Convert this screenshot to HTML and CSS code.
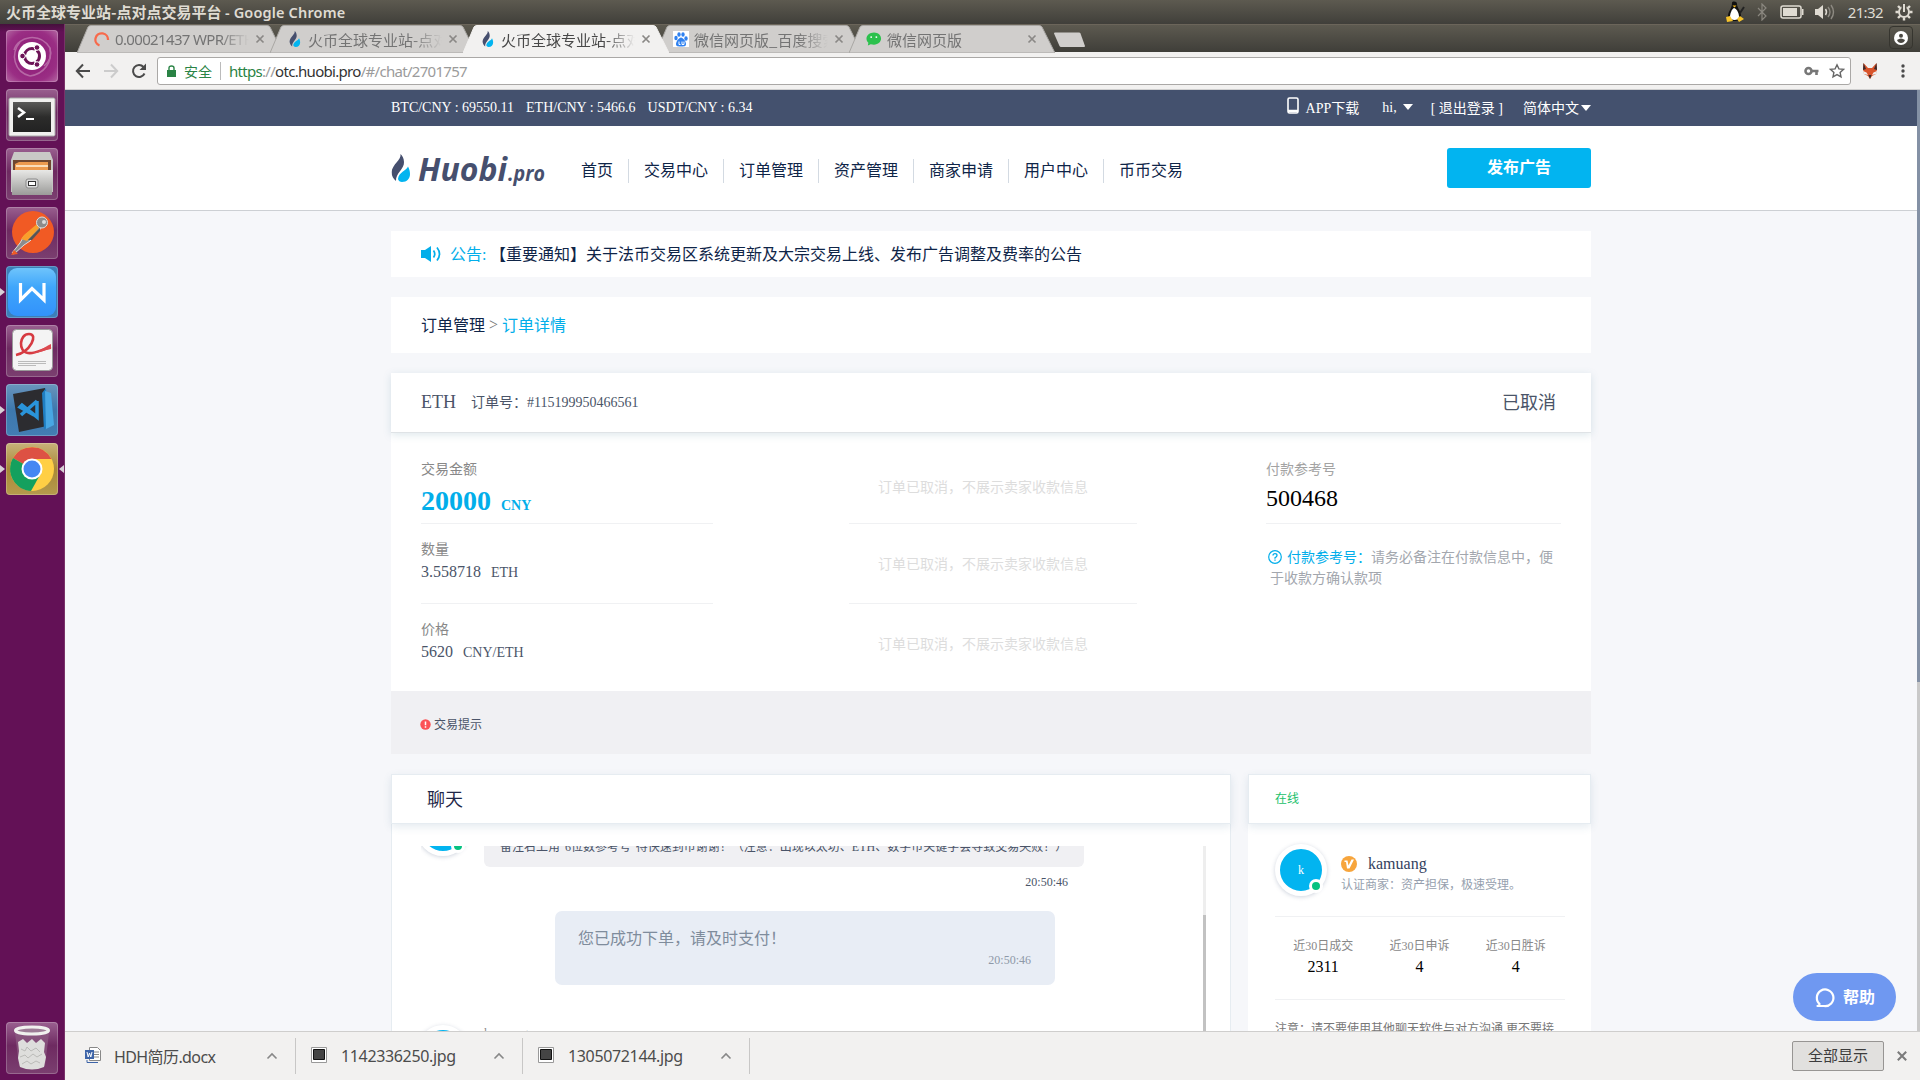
FILE: index.html
```html
<!DOCTYPE html>
<html lang="zh-CN">
<head>
<meta charset="utf-8">
<title>火币全球专业站-点对点交易平台</title>
<link rel="stylesheet" href="styles.css">
</head>
<body>
<svg class="defs" width="0" height="0">
  <defs>
    <linearGradient id="metal" x1="0" y1="0" x2="0" y2="1"><stop offset="0" stop-color="#e8e8e6"/><stop offset="1" stop-color="#9b9b99"/></linearGradient>
    <linearGradient id="screen" x1="0" y1="0" x2="0" y2="1"><stop offset="0" stop-color="#5a5a58"/><stop offset=".5" stop-color="#2c2c2b"/><stop offset="1" stop-color="#222"/></linearGradient>
    <linearGradient id="wps" x1="0" y1="0" x2="0" y2="1"><stop offset="0" stop-color="#6fc4fb"/><stop offset=".4" stop-color="#3fa6fb"/><stop offset="1" stop-color="#3292fb"/></linearGradient>
    <symbol id="flame" viewBox="0 0 19 28"><path d="M9 0C10 6 1 10 0 18c0 4 2 7 4.500 9C4 19 13 15 12.500 8 12.300 4 11 2 9 0z" fill="#464f6e"/><path d="M16.500 12.500C15 17 7 18 6.500 25c.5 2 2 3 4 3 5 0 8-3.500 8-8 0-3-.8-5-2-7.500z" fill="#02b4f0"/></symbol>
    <symbol id="close" viewBox="0 0 10 10"><path d="M1.500 1.500l7 7M8.500 1.500l-7 7" fill="none" stroke="currentColor" stroke-width="1.700"/></symbol>
    <symbol id="tab" viewBox="0 0 206 28" preserveAspectRatio="none"><path d="M0 28L11 2Q12 .5 14 .5H190Q192 .5 193 2L206 28z"/></symbol>
    <symbol id="jpg" viewBox="0 0 16 16"><path d="M.5.500h15v15H.5z" fill="#fff" stroke="#999"/><path d="M2.500 2.500h11v10h-11z" fill="#444" stroke="#111"/></symbol>
    <symbol id="up" viewBox="0 0 12 8"><path d="M1.500 6.500L6 2l4.500 4.500" fill="none" stroke="#888" stroke-width="1.600"/></symbol>
  </defs>
</svg>

<header class="sysbar">
  <span class="sys-title">火币全球专业站-点对点交易平台 <span class="lat">- Google Chrome</span></span>
  <div class="sys-icons">
    <svg width="20" height="24" viewBox="0 0 20 24"><path d="M7 3C7 1 12 1 12 4c0 4 4 7 4 12 0 4-3 5-7 5s-6-1-6-5c0-5 4-7 4-13z" fill="#111"/><path d="M9 8c3 1 5 5 5 9s-9 4-9 0c0-4 2-8 4-9z" fill="#fff"/><path d="M7.500 5.500l4 0-2 2z" fill="#f5b81c"/><path d="M1 17l4-1 3 5-6 1zM12 19l3-3 4 3-5 3z" fill="#f7c32a"/><path d="M15 13l4-6" stroke="#222" stroke-width="2"/></svg>
    <svg width="12" height="18" viewBox="0 0 12 18"><path d="M2 5l8 8-4 4V1l4 4-8 8" fill="none" stroke="#8a877f" stroke-width="1.200"/></svg>
    <svg width="24" height="14" viewBox="0 0 24 14"><rect x="1" y="1" width="20" height="12" rx="2" fill="none" stroke="#dfdbd2" stroke-width="1.500"/><path d="M3 3h14v8H3zM22 4h1.500v6H22z" fill="#dfdbd2"/></svg>
    <svg width="20" height="18" viewBox="0 0 20 18"><path d="M0 6h3l5-4v14l-5-4H0z" fill="#dfdbd2"/><path d="M10.500 6q2 3 0 6" fill="none" stroke="#dfdbd2" stroke-width="1.500"/><path d="M13 4q4 5 0 10M16 2q5 7 0 14" fill="none" stroke="#8d8a82" stroke-width="1.400"/></svg>
    <span class="clock">21:32</span>
    <svg width="18" height="18" viewBox="0 0 18 18"><g stroke="#dfdbd2" stroke-width="2.400"><path d="M9 .5v3M9 14.500v3M.5 9h3M14.500 9h3M3 3l2.200 2.200M12.800 12.800L15 15M15 3l-2.200 2.200M5.200 12.800L3 15"/></g><circle cx="9" cy="9" r="5" fill="none" stroke="#dfdbd2" stroke-width="2"/><path d="M9 0v7" stroke="#524f47" stroke-width="5"/><path d="M9 1v8" stroke="#dfdbd2" stroke-width="2"/></svg>
  </div>
</header>

<div class="desktop">
  <aside class="launcher">
    <div class="tile ubuntu"><svg width="52" height="52" viewBox="0 0 52 52"><g fill="none" stroke="#c583b6" stroke-width="1.500" opacity=".7"><path d="M8 20C12 6 34 2 44 18c2 8-1 14-6 18"/><path d="M14 12C4 24 8 42 24 46"/><path d="M44 18c3 14-6 26-20 28"/></g><circle cx="26" cy="26" r="14" fill="#fff"/><circle cx="26" cy="26" r="7.500" fill="none" stroke="#6d1457" stroke-width="3" stroke-dasharray="13.700 2" stroke-dashoffset="6.800"/><g fill="#6d1457" stroke="#fff"><circle cx="16.500" cy="26" r="2.800"/><circle cx="31" cy="17.500" r="2.800"/><circle cx="31" cy="34.500" r="2.800"/></g></svg></div>
    <div class="tile"><svg width="52" height="52" viewBox="0 0 52 52"><rect x="3" y="9" width="46" height="38" rx="1.500" fill="#f0f0ee" stroke="#aaa"/><rect x="7" y="13" width="38" height="30" fill="url(#screen)"/><path d="M12 19l6 4.500-6 4.500" fill="none" stroke="#fff" stroke-width="2.500"/><path d="M20 30h8" stroke="#fff" stroke-width="2"/></svg></div>
    <div class="tile"><svg width="52" height="52" viewBox="0 0 52 52"><path d="M8 4h36l3 8v32H5V12z" fill="#c9c9c6"/><path d="M7 12h38v12H7z" fill="#6f4630"/><path d="M9 16l4-2h29v8H9z" fill="#ed9a4f"/><path d="M10 18h32" stroke="#fff3df" stroke-width="1.500"/><path d="M5 22h42l-1 25H6z" fill="url(#metal)"/><rect x="20" y="31" width="12" height="9" rx="2" fill="#ddd" stroke="#888"/><rect x="22.500" y="33.500" width="7" height="4" fill="#fff" stroke="#333"/></svg></div>
    <div class="tile"><svg width="52" height="52" viewBox="0 0 52 52"><circle cx="27" cy="25" r="21" fill="#f15a24"/><path d="M33 17L18 29l-4 7-8 10 2 1 10-9 6-4 12-14z" fill="#8c8c8c" stroke="#ddd"/><path d="M31 17L18 28l-3 4 6 2 12-13z" fill="#f9a02c"/><path d="M34 21L22 33l4 0 8-9z" fill="#555"/><circle cx="36" cy="15.500" r="5.500" fill="#8c8c8c" stroke="#ddd"/><circle cx="38" cy="15" r="2" fill="#ddd"/><path d="M5 48l3-5 4 4z" fill="#f15a24"/></svg></div>
    <div class="tile blue run"><svg width="52" height="52" viewBox="0 0 52 52"><rect x="2" y="2" width="48" height="48" rx="9" fill="url(#wps)"/><path d="M14.500 17v17L26 22.500 38 34V17" fill="none" stroke="#fff" stroke-width="3.200"/></svg></div>
    <div class="tile"><svg width="52" height="52" viewBox="0 0 52 52"><rect x="6.500" y="4.500" width="40" height="41" rx="4" fill="#f4f4f4" stroke="#999"/><path d="M10 30C24 27 33 9 23 9c-10 0-11 18-1 19 8 1 14-4 23-6" fill="none" stroke="#d63a41" stroke-width="2.600"/><path d="M24 28c8 0 14-6 21-9v5c-7 1-13 5-21 4z" fill="#dc4a50"/><path d="M12 36.500h28M12 38.500h28M12 40.500h18" stroke="#bbb"/></svg></div>
    <div class="tile steel run"><svg width="52" height="52" viewBox="0 0 52 52"><path d="M7 10l32-6 2 38-28 6z" fill="#2c2c30"/><path d="M36 9l4-5 2 38-4 4z" fill="#1f7ec2"/><path d="M39 7l6 2 3 32-8 4z" fill="#48a7e4"/><path d="M31 17v16L16 21l-2 2 14 8M31 17L15 31" fill="none" stroke="#2a94da" stroke-width="3.500"/></svg></div>
    <div class="tile gold run focus"><svg width="52" height="52" viewBox="0 0 52 52"><circle cx="26" cy="26" r="22" fill="#ffcf45"/><path d="M26 26L7 15A22 22 0 0 1 45.500 16H26z" fill="#dd5144"/><path d="M26 26L7 15a22 22 0 0 0 18 33l9.500-17z" fill="#14a05e"/><circle cx="26" cy="26" r="10.500" fill="#fff"/><circle cx="26" cy="26" r="8.500" fill="#4587f3"/></svg></div>
    <div class="tile trash"><svg width="52" height="52" viewBox="0 0 52 52"><path d="M9 11l4 33q13 6 26 0l4-33z" fill="#8d5c83" opacity=".7"/><path d="M12 20l5-3 4 4 5-4 4 4 5-4 4 4-1 9 2 5-2 10q-12 5-24 0l-2-9 1-7z" fill="#dededc"/><path d="M15 27l4 2 2-4 4 4 5-3 4 4M14 35l5-2 3 3 5-4 4 3 5-3M16 42l5-3 4 3 5-3 4 2" fill="none" stroke="#bbbbb8"/><ellipse cx="26" cy="8.500" rx="16.500" ry="3.500" fill="#9d7b96" stroke="#f0f0ee" stroke-width="3"/></svg></div>
  </aside>

  <div class="browser">
    <nav class="tabs">
      <div class="tab"><svg class="tab-bg" viewBox="0 0 206 28"><use href="#tab"/></svg><svg class="fav" width="15" height="16" viewBox="0 0 15 16"><path d="M5 14.500A6.300 6.300 0 1 1 13.500 9" fill="none" stroke="#f76a4b" stroke-width="2.300"/></svg><span class="tab-text lat">0.00021437 WPR/ETH</span><svg class="x"><use href="#close"/></svg></div>
      <div class="tab"><svg class="tab-bg" viewBox="0 0 206 28"><use href="#tab"/></svg><svg class="fav" width="15" height="16"><use href="#flame"/></svg><span class="tab-text">火币全球专业站-点对点</span><svg class="x"><use href="#close"/></svg></div>
      <div class="tab active"><svg class="tab-bg" viewBox="0 0 206 28"><use href="#tab"/></svg><svg class="fav" width="15" height="16"><use href="#flame"/></svg><span class="tab-text">火币全球专业站-点对点</span><svg class="x"><use href="#close"/></svg></div>
      <div class="tab"><svg class="tab-bg" viewBox="0 0 206 28"><use href="#tab"/></svg><svg class="fav" width="16" height="16" viewBox="0 0 16 16"><path d="M0 0h16v16H0z" fill="#fff"/><g fill="#2f81f0"><ellipse cx="3" cy="7" rx="1.700" ry="2.200"/><ellipse cx="6" cy="3.500" rx="1.700" ry="2.300"/><ellipse cx="10" cy="3.500" rx="1.700" ry="2.300"/><ellipse cx="13" cy="7.500" rx="1.700" ry="2.200"/><path d="M8 6.500c2 0 5 4 5 6.500s-2 2.500-5 2.500-5 0-5-2.500 3-6.500 5-6.500z"/></g><path d="M6 10.500v3h1.500M9 10.500v3h2v-3" fill="none" stroke="#fff"/></svg><span class="tab-text">微信网页版_百度搜索</span><svg class="x"><use href="#close"/></svg></div>
      <div class="tab"><svg class="tab-bg" viewBox="0 0 206 28"><use href="#tab"/></svg><svg class="fav" width="17" height="16" viewBox="0 0 17 16"><path d="M8.500 1C13 1 16 4 16 7.500S13 14 8.500 14L5 13.500 2 15l.5-3C1 11 .5 9 .5 7.500.500 4 4 1 8.500 1z" fill="#2cc14d"/><circle cx="5.500" cy="6" r="1" fill="#fff"/><circle cx="11" cy="6" r="1" fill="#fff"/></svg><span class="tab-text">微信网页版</span><svg class="x"><use href="#close"/></svg></div>
      <svg class="newtab" width="33" height="16" viewBox="0 0 33 16"><path d="M1 1.500Q1 .5 2 .5H26Q27 .5 27.500 1.500L32 14q0 1-1 1H8Q7 15 6.500 14z" fill="#d0cecc"/></svg>
      <span class="user"><svg width="14" height="14" viewBox="0 0 14 14"><circle cx="7" cy="7" r="7" fill="#fff"/><circle cx="7" cy="4.700" r="2" fill="#4a4842"/><path d="M3 9q4-3 8 0-1 3-4 3T3 9z" fill="#4a4842"/></svg></span>
    </nav>

    <div class="toolbar">
      <svg width="16" height="16" viewBox="0 0 16 16"><path d="M15 8H2M8 1.500L1.800 8 8 14.500" fill="none" stroke="#4a4a4a" stroke-width="2"/></svg>
      <svg width="16" height="16" viewBox="0 0 16 16"><path d="M1 8h13M8 1.500L14.200 8 8 14.500" fill="none" stroke="#ccc" stroke-width="2"/></svg>
      <svg width="16" height="16" viewBox="0 0 16 16"><path d="M13.500 10.500A6 6 0 1 1 12.500 4" fill="none" stroke="#4a4a4a" stroke-width="2"/><path d="M15 .5V7H8.500z" fill="#4a4a4a"/></svg>
      <div class="omnibox">
        <svg width="9" height="12" viewBox="0 0 9 12"><path d="M0 5h9v7H0z" fill="#2a8345"/><path d="M2 5V3q0-2 2.500-2T7 3v2" fill="none" stroke="#2a8345" stroke-width="1.400"/></svg>
        <span class="secure">安全</span>
        <span class="url lat"><b>https</b>://<i>otc.huobi.pro</i>/#/chat/2701757</span>
        <svg class="key" width="15" height="10" viewBox="0 0 15 10"><circle cx="4.500" cy="5" r="3" fill="none" stroke="#777" stroke-width="2.600"/><path d="M8 5h6.500M12.500 5v4" stroke="#777" stroke-width="2.600"/></svg>
        <svg width="16" height="16" viewBox="0 0 16 16"><path d="M8 1.800l1.900 4.100 4.500.5-3.300 3 .9 4.400L8 11.600l-4 2.200.9-4.400-3.300-3 4.500-.5z" fill="none" stroke="#666" stroke-width="1.400"/></svg>
      </div>
      <svg class="fox" width="16" height="16" viewBox="0 0 16 16"><path d="M1.500 0L6 5h4l4.500-5 .5 6-1 5-4 2-2 3-2-3-4-2-1-5z" fill="#d9542b"/><path d="M1.500 0L4 6 1 7zM14.500 0L12 6l3 1zM6.500 12L8 16l1.500-4z" fill="#3a2a2c"/><path d="M1 8l3.500 1.500L6 12l-4-1zM15 8l-3.500 1.500L10 12l4-1z" fill="#eee"/></svg>
      <svg width="4" height="14" viewBox="0 0 4 14"><g fill="#4a4a4a"><circle cx="2" cy="2" r="1.700"/><circle cx="2" cy="7" r="1.700"/><circle cx="2" cy="12" r="1.700"/></g></svg>
    </div>

    <div class="page">
      <div class="topline"><div class="wrap topline-in">
        <span class="tick">BTC/CNY : 69550.11</span><span class="tick">ETH/CNY : 5466.6</span><span class="tick">USDT/CNY : 6.34</span>
        <span class="top-app"><svg width="12" height="17" viewBox="0 0 12 17"><rect x="1" y="1" width="10" height="15" rx="1.500" fill="none" stroke="#fff" stroke-width="1.600"/><path d="M1 14h10" stroke="#fff" stroke-width="2.500"/></svg>APP下载</span>
        <span class="top-hi">hi,<i class="caret"></i></span>
        <span class="top-out">[ 退出登录 ]</span>
        <span class="top-lang">简体中文<i class="caret"></i></span>
      </div></div>

      <div class="mainnav"><div class="wrap mainnav-in">
        <svg class="logo" width="155" height="38" viewBox="0 0 155 38"><use href="#flame" x="0.500" y="4" width="19" height="28"/><g class="logo-text"><text x="27" y="31" font-size="32" textLength="89" lengthAdjust="spacingAndGlyphs">Huobi</text><text x="117" y="31" font-size="22" textLength="37" lengthAdjust="spacingAndGlyphs">.pro</text></g></svg>
        <ul class="menu"><li>首页</li><li>交易中心</li><li>订单管理</li><li>资产管理</li><li>商家申请</li><li>用户中心</li><li>币币交易</li></ul>
        <a class="publish">发布广告</a>
      </div></div>

      <main class="wrap">
        <div class="notice"><svg width="21" height="16" viewBox="0 0 21 16"><path d="M0 4h4l6-4v16l-6-4H0z" fill="#02aeea"/><path d="M12.500 4.500q2.500 3.500 0 7M16 1.500q5 6.500 0 13" fill="none" stroke="#02aeea" stroke-width="1.700"/></svg><span class="cy">公告:</span><span>【重要通知】关于法币交易区系统更新及大宗交易上线、发布广告调整及费率的公告</span></div>
        <div class="crumb">订单管理<span class="gt">&gt;</span><span class="cy">订单详情</span></div>

        <section class="order">
          <header class="order-head"><span class="coin">ETH</span><span class="orderno">订单号：#115199950466561</span><span class="state">已取消</span></header>
          <div class="order-body">
            <div class="col-a">
              <div class="cell"><p class="lab">交易金额</p><p class="big">20000<small>CNY</small></p></div>
              <div class="cell"><p class="lab">数量</p><p class="val">3.558718<small>ETH</small></p></div>
              <div class="cell"><p class="lab">价格</p><p class="val">5620<small>CNY/ETH</small></p></div>
            </div>
            <div class="col-b"><p>订单已取消，不展示卖家收款信息</p><p>订单已取消，不展示卖家收款信息</p><p>订单已取消，不展示卖家收款信息</p></div>
            <div class="col-c">
              <div class="cell"><p class="lab">付款参考号</p><p class="ref">500468</p></div>
              <p class="hint"><svg width="14" height="14" viewBox="0 0 14 14"><circle cx="7" cy="7" r="6.300" fill="none" stroke="#02aeea" stroke-width="1.200"/><path d="M5 5.500Q5 3.700 7 3.700t2 1.700Q9 6.500 7 7.700v1M7 9.500v1.300" fill="none" stroke="#02aeea" stroke-width="1.300"/></svg><span class="cy">付款参考号：</span>请务必备注在付款信息中，便<br>于收款方确认款项</p>
            </div>
          </div>
          <div class="tips"><svg width="11" height="11" viewBox="0 0 11 11"><circle cx="5.500" cy="5.500" r="5.200" fill="#fb5257"/><path d="M5.500 2.500v3.800M5.500 7.300v1.500" stroke="#fff" stroke-width="1.500"/></svg>交易提示</div>
        </section>

        <div class="lower">
          <section class="chat">
            <header class="panel-head">聊天</header>
            <div class="chat-body">
              <div class="scroll">
                <div class="msg first"><span class="avatar"><i class="on"></i></span><div class="bubble">备注右上角"6位数参考号"待快速到币谢谢！（注意：出现以太坊、ETH、数字币关键字会导致交易失败！）</div></div>
                <time class="t1">20:50:46</time>
                <div class="system"><p>您已成功下单，请及时支付！</p><time>20:50:46</time></div>
                <div class="msg second"><span class="avatar"><i class="on"></i></span><span class="who">kamuang</span></div>
              </div>
              <div class="bar"><i></i></div>
            </div>
          </section>
          <section class="side">
            <header class="panel-head online">在线</header>
            <div class="side-body">
              <div class="seller"><span class="avatar">k<i class="on"></i></span><div><p class="name"><svg width="16" height="16" viewBox="0 0 16 16"><circle cx="8" cy="8" r="8" fill="#f7a53c"/><path d="M3.500 4.500H6.500L7.500 9.500 10.500 3.500H13L8.500 12.500H6L5 6H3.500z" fill="#fff"/></svg>kamuang</p><p class="cert">认证商家：资产担保，极速受理。</p></div></div>
              <div class="stats"><div><span>近30日成交</span><b>2311</b></div><div><span>近30日申诉</span><b>4</b></div><div><span>近30日胜诉</span><b>4</b></div></div>
              <p class="caution">注意：请不要使用其他聊天软件与对方沟通,更不要接</p>
            </div>
          </section>
        </div>
      </main>
      <div class="pagebar"><i></i></div>
      <a class="help"><svg width="21" height="21" viewBox="0 0 21 21"><path d="M5 17.300A8.300 8.300 0 1 1 9 19H2.500Q4.500 18.500 5 17.300" fill="none" stroke="#fff" stroke-width="2.200" stroke-linejoin="round"/></svg><span>帮助</span></a>
    </div>

    <footer class="downloads">
      <div class="dl"><svg width="16" height="16" viewBox="0 0 16 16"><path d="M4.500.500h8l3 3v10h-11z" fill="#fff" stroke="#888"/><path d="M9 5h5M9 7.500h5M9 10h5" stroke="#888"/><path d="M0 3h9v9H0z" fill="#3d64a8"/><path d="M2 5l1.200 5 1.300-4 1.300 4L7 5" fill="none" stroke="#fff"/><path d="M2 13v2.500h11" fill="none" stroke="#3d64a8"/></svg><span class="lat n1">HDH简历.docx</span><svg class="up"><use href="#up"/></svg></div>
      <div class="dl"><svg width="16" height="16"><use href="#jpg"/></svg><span class="lat">1142336250.jpg</span><svg class="up"><use href="#up"/></svg></div>
      <div class="dl"><svg width="16" height="16"><use href="#jpg"/></svg><span class="lat">1305072144.jpg</span><svg class="up"><use href="#up"/></svg></div>
      <a class="showall">全部显示</a><svg class="dlx"><use href="#close"/></svg>
    </footer>
  </div>
</div>
</body>
</html>
```

FILE: styles.css
```css
* { box-sizing: border-box; }
body { margin: 0; width: 1920px; height: 1080px; overflow: hidden; font: 14px "Liberation Serif", "Noto Sans CJK SC", serif; color: #4a5468; }
p, ul { margin: 0; padding: 0; list-style: none; }
i { font-style: normal; }
svg { display: block; flex: none; }
.defs { position: absolute; }
.lat { font-family: "Noto Sans", "Noto Sans CJK SC", sans-serif; }
.cy { color: #02aeea; }

.sysbar { display: flex; align-items: center; justify-content: space-between; height: 24px; padding: 0 7px 0 6px; background: linear-gradient(#5d5a50, #403f3a); color: #dfdbd2; }
.sys-title { font: bold 15px/24px "Noto Sans CJK SC", sans-serif; white-space: pre; }
.sys-title .lat { font-size: 14.5px; font-weight: 600; letter-spacing: .15px; }
.sys-icons { display: flex; align-items: center; }
.sys-icons svg:nth-child(2) { margin-left: 11px; }
.sys-icons svg:nth-child(3) { margin-left: 12px; }
.sys-icons svg:nth-child(4) { margin-left: 11px; }
.clock { font: 15px/24px "Noto Sans", sans-serif; letter-spacing: -.6px; margin: 0 12px 0 13px; }

.desktop { display: flex; height: 1056px; }
.launcher { width: 65px; background: linear-gradient(#45103c, #631156 8px, #631156); border-right: 1px solid #793269; padding: 6px 0 6px 6px; display: flex; flex-direction: column; gap: 7px; }
.tile { position: relative; width: 52px; height: 52px; border-radius: 4px; background: linear-gradient(#9a6090, #6e2a61 45%, #7b3f70); box-shadow: inset 0 0 0 1px rgba(255,255,255,.22); }
.ubuntu { background: radial-gradient(circle, #8a1874, #9a2e84 70%, #b56aa4); }
.blue { background: #3c7fb8; }
.steel { background: linear-gradient(#6a95bd, #3d78ad 50%, #437db3); }
.gold { background: linear-gradient(#c8b27a, #a98937 50%, #b59a4d); }
.trash { margin-top: auto; }
.run::before, .focus::after { content: ""; position: absolute; top: 22px; left: -6px; border: 4px solid transparent; border-left: 5px solid #d8d0d6; border-right: 0; }
.focus::after { left: 53px; border-left: 0; border-right: 5px solid #d8d0d6; }

.browser { flex: 1; display: flex; flex-direction: column; min-width: 0; }
.tabs { display: flex; align-items: flex-start; height: 28px; padding: 0 7px 0 12px; background: linear-gradient(#5d5a50, #3f3e39); border-top: 1px solid #6b655a; }
.tab { position: relative; display: flex; align-items: center; width: 206px; height: 28px; margin-right: -13px; padding-left: 17px; color: #747474; flex: none; }
.tab > * { position: relative; }
.tab .tab-bg { position: absolute; left: 0; top: 0; width: 206px; height: 28px; fill: #d0cecc; stroke: #a9a7a4; }
.active { z-index: 2; color: #484848; }
.active .tab-bg { fill: #f2f1f0; stroke: #f2f1f0; }
.tab .fav { width: 16px; }
.tab-text { width: 134px; margin-left: 5px; font: 15px/27px "Noto Sans CJK SC", sans-serif; white-space: nowrap; overflow: hidden; -webkit-mask-image: linear-gradient(90deg, #000 78%, transparent); mask-image: linear-gradient(90deg, #000 78%, transparent); }
.tab-text.lat { font: 15px/27px "Noto Sans", sans-serif; letter-spacing: -.65px; }
.x { width: 10px; height: 10px; margin-left: 6px; color: #8a8886; }
.newtab { margin: 7px 0 0 11px; }
.user { display: flex; align-items: center; justify-content: center; margin: 1px 0 0 auto; width: 24px; height: 23px; border: 1px solid #36352f; border-radius: 4px; }

.toolbar { display: flex; align-items: center; height: 38px; padding: 0 15px 0 10px; background: #f2f1f0; border-bottom: 1px solid #cfcfcf; flex: none; }
.toolbar > svg + svg { margin-left: 12px; }
.omnibox { display: flex; align-items: center; width: 1696px; height: 28px; margin-left: 10px; border: 1px solid #aaa8a6; border-radius: 3px; background: #fff; padding: 0 5px 0 9px; }
.secure { font: 14px/26px "Noto Sans CJK SC", sans-serif; color: #2a8345; margin-left: 8px; padding-right: 8px; }
.url { font-size: 15px; line-height: 18px; color: #9b9b9b; border-left: 1px solid #bbb; padding-left: 8px; letter-spacing: -.7px; }
.url b { font-weight: 400; color: #2a8345; }
.url i { color: #333; }
.key { margin: 0 10px 0 auto; }
.fox { margin-left: 11px; }
.toolbar > .fox + svg { margin-left: 23px; }

.page { position: relative; height: 941px; overflow: hidden; background: #f6f7fa; flex: none; }
.wrap { width: 1200px; margin-left: 326px; }
.topline { height: 36px; background: #44516e; color: #fff; }
.topline-in { display: flex; align-items: center; height: 34px; }
.tick { margin-right: 12px; padding-top: 2px; }
.top-app { display: flex; align-items: center; gap: 7px; margin-left: auto; margin-top: -1px; }
.top-app svg { margin-top: -3px; }
.top-hi { margin-left: 23px; padding-top: 2px; }
.top-out { margin-left: 18px; margin-top: -1px; }
.top-lang { margin-left: 20px; margin-top: -1px; }
.caret { display: inline-block; border: 5px solid transparent; border-top: 6px solid #fff; border-bottom: 0; margin-left: 6px; vertical-align: 2px; }
.top-lang .caret { margin-left: 2px; }

.mainnav { height: 85px; background: #fff; border-bottom: 1px solid #cdd0d4; }
.mainnav-in { display: flex; }
.logo { margin-top: 24px; }
.logo-text { font-family: "Open Sans", sans-serif; font-weight: 700; font-style: italic; fill: #464f6e; }
.menu { display: flex; margin: 33px 0 0 20px; font-size: 16px; line-height: 23px; color: #0f2548; }
.menu li { padding: 0 15px; height: 24px; border-right: 1px solid #d3dae2; }
.menu li:last-child { border: 0; }
.publish { margin: 22px 0 0 auto; width: 144px; height: 40px; border-radius: 3px; background: #02b4f0; color: #fff; font: bold 16px/36px "Noto Sans CJK SC", sans-serif; text-align: center; }

.notice, .crumb { display: flex; align-items: center; background: #fff; font-size: 16px; color: #0f2548; padding-left: 30px; }
.notice { height: 46px; margin-top: 20px; gap: 8px; padding-bottom: 1px; }
.notice svg { margin-top: 1px; }
.notice .cy { width: 32px; white-space: nowrap; }
.notice span { margin-top: -1px; }
.crumb { height: 56px; margin-top: 20px; padding-bottom: 3px; }
.gt { color: #777; margin: 2px 4px 0; }

.order { margin-top: 20px; background: #fff; }
.order-head { display: flex; align-items: center; height: 60px; padding: 0 35px 0 30px; border-bottom: 1px solid #dfe3e6; box-shadow: 0 2px 8px rgba(70,130,150,.18); }
.coin { font-size: 18px; }
.orderno { margin: -3px 0 0 15px; }
.state { font-size: 18px; margin: -4px 0 0 auto; }
.order-body { display: flex; height: 258px; padding: 10px 30px 0; }
.col-a { width: 292px; }
.col-b { width: 288px; margin-left: 136px; }
.col-c { width: 295px; margin-left: 129px; }
.cell { height: 80px; padding-top: 16px; border-bottom: 1px solid #f0f1f3; }
.col-a .cell:nth-child(3) { border: 0; }
.col-a .cell:nth-child(1), .col-c .cell { height: 81px; padding-top: 17px; }
.lab { line-height: 20px; color: #888; }
.col-c .lab { color: #a3a3a3; }
.big { font-size: 28px; font-weight: 700; line-height: 32px; margin-top: 5px; color: #02aeea; }
.big small { font-size: 14px; margin-left: 10px; }
.val { font-size: 16px; line-height: 22px; margin-top: 1px; }
.val small { font-size: 14px; margin-left: 10px; }
.ref { font-size: 24px; line-height: 28px; margin-top: 4px; color: #000; }
.col-b p { height: 80px; padding: 16px 0 0 29px; line-height: 50px; color: #ddd; border-bottom: 1px solid #f0f1f3; }
.col-b p:first-child { height: 81px; padding-top: 20px; }
.col-b p:last-child { border: 0; }
.hint { padding: 23px 0 0 4px; line-height: 21px; color: #a3a7ae; white-space: nowrap; }
.hint svg { display: inline-block; vertical-align: -2px; margin: 0 5px 0 -2px; }
.tips { display: flex; align-items: center; gap: 3px; height: 63px; padding: 3px 0 0 29px; font-size: 12px; background: #f0f0f3; }

.lower { display: flex; justify-content: space-between; margin-top: 20px; }
.chat { width: 840px; }
.side { width: 343px; background: #fff; }
.panel-head { position: relative; height: 50px; padding-left: 35px; border: 1px solid #e6ecf1; background: #fff; box-shadow: 0 3px 8px rgba(70,110,150,.14); font-size: 18px; line-height: 50px; color: #1f2748; }
.online { font-size: 12px; line-height: 48px; padding-left: 26px; color: #1abf6b; }
.chat-body { display: flex; justify-content: space-between; height: 400px; padding: 22px 24px 0 29px; border: 1px solid #e6ecf1; border-top: 0; background: #fff; }
.scroll { width: 700px; height: 300px; overflow: hidden; }
.bar { width: 3px; height: 300px; background: #eee; padding-top: 69px; }
.bar i { display: block; height: 231px; background: #c2c2c2; }
.avatar { position: relative; display: block; flex: none; width: 52px; height: 52px; border-radius: 50%; border: 5px solid #fff; background: #02b4f0; box-shadow: 0 1px 4px rgba(60,80,120,.25); color: #fff; font-size: 12px; line-height: 42px; text-align: center; }
.on { position: absolute; right: -1px; bottom: -2px; width: 14px; height: 14px; border: 3px solid #fff; border-radius: 50%; background: #06c281; }
.msg { display: flex; margin-left: -5px; }
.first { height: 21px; align-items: flex-end; }
.first .avatar { margin: 0 0 11px 1px; }
.bubble { margin-left: 15px; width: 600px; height: 50px; border-radius: 6px; background: #f0f0f3; padding: 18px 16px 0; font-size: 12px; line-height: 24px; white-space: nowrap; }
time { font-size: 12px; line-height: 14px; }
.t1 { display: block; width: 647px; margin-top: 8px; text-align: right; }
.system { width: 500px; height: 74px; margin: 22px 0 0 134px; padding: 16px 24px 0 23px; border-radius: 7px; background: #e8edf5; color: #7f8c9c; }
.system p { font-size: 16px; line-height: 24px; }
.system time { display: block; text-align: right; color: #8e99a8; margin-top: 2px; }
.second { margin-top: 40px; }
.second .avatar { margin-left: 1px; }
.who { margin: 1px 0 0 15px; font-size: 12px; line-height: 14px; color: #888; }

.side-body { padding: 20px 26px 0 27px; }
.seller { display: flex; height: 73px; border-bottom: 1px solid #f0f1f3; }
.seller > div { margin-left: 14px; padding-top: 9px; }
.name { display: flex; gap: 11px; align-items: center; font-size: 16px; line-height: 22px; color: #33415e; }
.cert { font-size: 12px; line-height: 18px; margin-top: 1px; color: #969fae; }
.stats { display: flex; height: 83px; padding: 20px 1px 0 0; border-bottom: 1px solid #f0f1f3; text-align: center; }
.stats div { flex: 1; }
.stats span { display: block; font-size: 12px; line-height: 18px; color: #888; }
.stats b { display: block; font-weight: 400; font-size: 16px; line-height: 24px; color: #000; }
.caution { font-size: 12px; line-height: 20px; margin-top: 19px; color: #777; white-space: nowrap; }

.pagebar { position: absolute; right: 0; top: 0; width: 3px; height: 941px; background: #c9c9c9; }
.pagebar i { display: block; height: 592px; background: #8491a5; }
.help { position: absolute; right: 24px; bottom: 10px; display: flex; align-items: center; gap: 7px; width: 103px; height: 48px; padding-left: 22px; border-radius: 24px; background: #6f98f1; color: #fff; font: bold 16px/48px "Noto Sans CJK SC", sans-serif; }
.help span { margin-top: -2px; }

.downloads { display: flex; align-items: center; height: 49px; background: #f2f1f0; border-top: 1px solid #cfcecd; }
.dl { display: flex; align-items: center; width: 227px; height: 36px; padding-left: 15px; border-right: 1px solid #c8c7c6; color: #4c4c4c; font-size: 16px; }
.dl:first-child { width: 231px; padding-left: 20px; }
.dl > svg:first-child { margin-top: -3px; }
.dl .lat { margin-left: 14px; letter-spacing: -.35px; }
.dl .n1 { margin-left: 13px; letter-spacing: -.6px; }
.up { width: 12px; height: 8px; margin: 0 17px 0 auto; }
.showall { margin-left: auto; width: 92px; height: 30px; border: 1px solid #979593; border-radius: 2px; background: #e1e0de; font: 15px/26px "Noto Sans CJK SC", sans-serif; text-align: center; color: #3c3c3c; }
.dlx { width: 12px; height: 12px; margin: 0 12px; color: #7b7b7b; }
```
